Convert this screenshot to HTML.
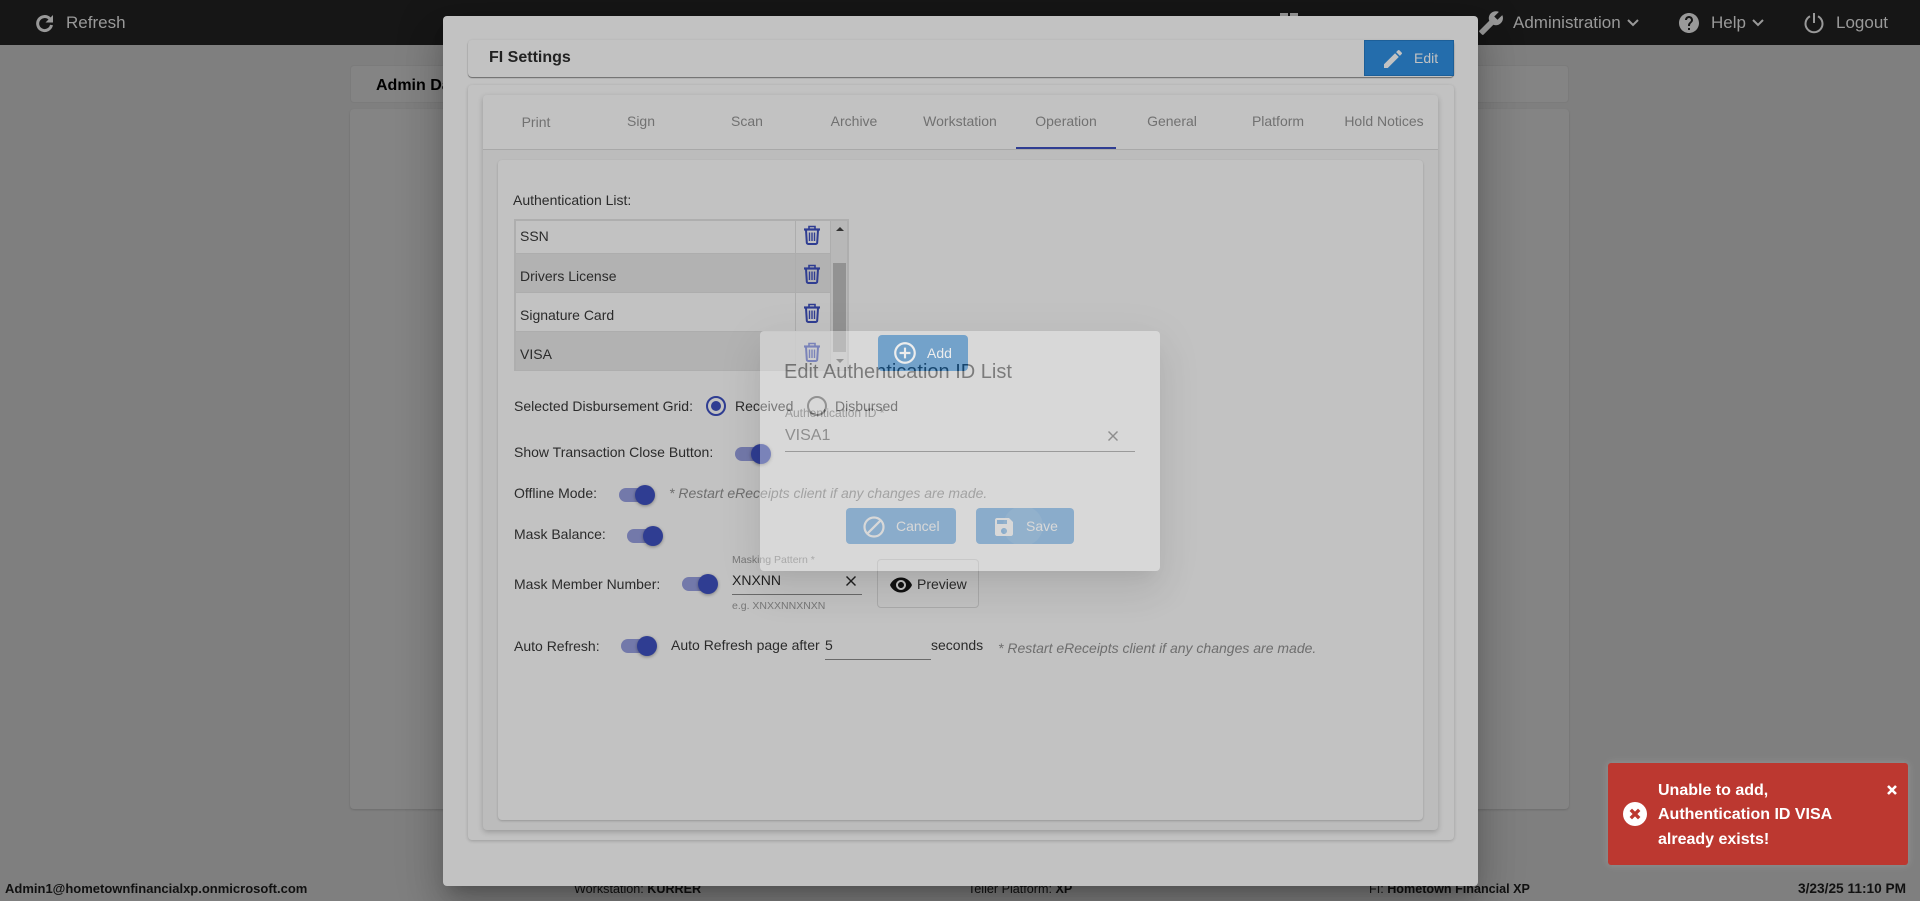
<!DOCTYPE html>
<html lang="en"><head><meta charset="utf-8"><title>FI Settings</title>
<style>
html,body{margin:0;padding:0;width:1920px;height:901px;overflow:hidden;background:#7f7f7f;font-family:"Liberation Sans",Arial,sans-serif}
div,span,svg{position:absolute;box-sizing:border-box}
.t{white-space:nowrap;line-height:20px;height:20px;font-size:14px;color:#2b2b2b}
.n{color:#999;font-size:17px}
.tab{color:#717171;font-size:14px;width:106px;text-align:center;top:111px}
.f{color:#111;font-size:12.6px;top:879px}
b{font-weight:700}
.it{font-style:italic;color:#6e6e6e;font-size:14px}
.trk{width:34px;height:14px;border-radius:7px;background:#7379aa}
.th{width:20px;height:20px;border-radius:50%;background:#2f3d92;box-shadow:0 1px 3px rgba(0,0,0,.35)}
.row{left:516px;width:314px;border-bottom:1px solid #adadad}
.btn{border-radius:4px;background:#2a88db}
.tr{left:803px;width:18px;height:20px;fill:none;stroke:#2f3d92}
</style></head><body>

<!-- header -->
<div style="left:0;top:0;width:1920px;height:45px;background:#161616"></div>
<svg style="left:34px;top:13px" width="22" height="22" viewBox="0 0 22 22" fill="none"><path d="M15.600 5.600A7 7 0 1 0 17.500 12" stroke="#999" stroke-width="3"/><path d="M19 2v7.500h-7.500z" fill="#999"/></svg>
<div class="t n" style="left:66px;top:13px">Refresh</div>
<div style="left:1280px;top:13px;width:8px;height:6px;background:#999"></div>
<div style="left:1290px;top:13px;width:8px;height:6px;background:#999"></div>
<svg style="left:1478px;top:10px;transform:scaleX(-1)" width="26" height="26" viewBox="0 0 24 24" fill="#999"><path d="M22.700 19l-9.100-9.100c.9-2.300.4-5-1.500-6.900-2-2-5-2.400-7.400-1.300L9 6 6 9 1.600 4.700C.4 7.100.9 10.100 2.900 12.100c1.900 1.900 4.600 2.400 6.900 1.500l9.100 9.100c.4.4 1 .4 1.400 0l2.300-2.300c.5-.4.5-1.100.1-1.400z"/></svg>
<div class="t n" style="left:1513px;top:13px">Administration</div>
<svg style="left:1627px;top:18px" width="12" height="10" viewBox="0 0 12 10" fill="none" stroke="#999" stroke-width="2"><path d="M1 2l5 5 5-5"/></svg>
<svg style="left:1677px;top:11px" width="24" height="24" viewBox="0 0 24 24" fill="#999"><path d="M12 2C6.480 2 2 6.480 2 12s4.480 10 10 10 10-4.480 10-10S17.520 2 12 2zm1 17h-2v-2h2v2zm2.070-7.750l-.9.920C13.450 12.900 13 13.500 13 15h-2v-.5c0-1.100.45-2.100 1.170-2.830l1.240-1.260c.37-.36.59-.86.59-1.410 0-1.100-.9-2-2-2s-2 .9-2 2H8c0-2.210 1.790-4 4-4s4 1.790 4 4c0 .88-.36 1.680-.93 2.250z"/></svg>
<div class="t n" style="left:1711px;top:13px">Help</div>
<svg style="left:1752px;top:18px" width="12" height="10" viewBox="0 0 12 10" fill="none" stroke="#999" stroke-width="2"><path d="M1 2l5 5 5-5"/></svg>
<svg style="left:1802px;top:11px" width="24" height="24" viewBox="0 0 24 24" fill="none" stroke="#999" stroke-width="2"><path d="M12 2v10M8 5.200a8.500 8.500 0 1 0 8 0"/></svg>
<div class="t n" style="left:1836px;top:13px">Logout</div>

<!-- page cards -->
<div style="left:350px;top:65px;width:1219px;height:38px;background:#848484;border:1px solid #7b7b7b;border-radius:4px"></div>
<div class="t" style="left:376px;top:76px;font-weight:700;font-size:16px;color:#000">Admin Dashboard</div>
<div style="left:350px;top:109px;width:1219px;height:700px;background:#848484;border-radius:4px;box-shadow:0 1px 2px rgba(0,0,0,.15)"></div>

<!-- footer -->
<div class="t f" style="left:5px;font-weight:700;font-size:13px">Admin1@hometownfinancialxp.onmicrosoft.com</div>
<div class="t f" style="left:574px">Workstation: <b>KURRER</b></div>
<div class="t f" style="left:968px">Teller Platform: <b>XP</b></div>
<div class="t f" style="left:1369px">FI: <b>Hometown Financial XP</b></div>
<div class="t f" style="left:1798px;font-weight:700;font-size:13.700px">3/23/25 11:10 PM</div>

<!-- modal -->
<div style="left:443px;top:16px;width:1035px;height:870px;background:#c2c2c2;border-radius:4px;box-shadow:0 11px 15px -7px rgba(0,0,0,.2),0 24px 38px 3px rgba(0,0,0,.14),0 9px 46px 8px rgba(0,0,0,.12)"></div>
<div style="left:468px;top:40px;width:986px;height:37px;background:#c2c2c2;border-radius:4px;box-shadow:0 1px 1px rgba(0,0,0,.45),0 0 2px rgba(0,0,0,.08)"></div>
<div class="t" style="left:489px;top:48px;font-weight:700;font-size:16px;color:#222">FI Settings</div>
<div style="left:1364px;top:40px;width:90px;height:36px;background:#246dac;border:1px solid #1d5f98"></div>
<svg style="left:1381px;top:47px" width="24" height="24" viewBox="0 0 24 24" fill="#c2c2c2"><path d="M3 17.250V21h3.750L17.810 9.940l-3.750-3.750L3 17.250zM20.710 7.040c.39-.39.39-1.020 0-1.410l-2.340-2.340c-.39-.39-1.020-.39-1.410 0l-1.830 1.830 3.750 3.750 1.830-1.830z"/></svg>
<div class="t" style="left:1414px;top:48px;color:#c2c2c2;font-size:14px">Edit</div>

<div style="left:468px;top:85px;width:986px;height:755px;background:#c2c2c2;border-radius:4px;box-shadow:0 1px 3px rgba(0,0,0,.2)"></div>
<div style="left:483px;top:95px;width:955px;height:735px;background:#bcbcbc;border-radius:4px;box-shadow:0 2px 6px rgba(0,0,0,.22)"></div>
<div style="left:483px;top:95px;width:955px;height:55px;background:#c2c2c2;border-bottom:1px solid #a8a8a8;border-radius:4px 4px 0 0"></div>
<div class="t tab" style="left:483px;top:112px">Print</div>
<div class="t tab" style="left:588px">Sign</div>
<div class="t tab" style="left:694px">Scan</div>
<div class="t tab" style="left:801px">Archive</div>
<div class="t tab" style="left:907px">Workstation</div>
<div class="t tab" style="left:1013px">Operation</div>
<div class="t tab" style="left:1119px">General</div>
<div class="t tab" style="left:1225px">Platform</div>
<div class="t tab" style="left:1331px">Hold Notices</div>
<div style="left:1016px;top:147px;width:100px;height:2px;background:#2f3d92"></div>
<div style="left:498px;top:160px;width:925px;height:660px;background:#c2c2c2;border-radius:4px;box-shadow:0 1px 2px rgba(0,0,0,.2)"></div>

<div class="t" style="left:513px;top:190px">Authentication List:</div>

<!-- list -->
<div style="left:514px;top:219px;width:335px;height:152px;border:2px solid #aeaeae;background:#c2c2c2"></div>
<div class="row" style="top:221px;height:33px"></div>
<div class="row" style="top:254px;height:39px;background:#b2b2b2"></div>
<div class="row" style="top:293px;height:39px"></div>
<div class="row" style="top:332px;height:38px;background:#b2b2b2;border-bottom:0"></div>
<div style="left:795px;top:221px;width:1px;height:149px;background:#adadad"></div>
<div style="left:830px;top:221px;width:1px;height:149px;background:#adadad"></div>
<div style="left:831px;top:221px;width:16px;height:149px;background:#b8b8b8"></div>
<div style="left:833px;top:263px;width:13px;height:89px;background:#929292"></div>
<div style="left:836px;top:227px;width:0;height:0;border:4px solid transparent;border-bottom:4px solid #333;border-top:0"></div>
<div style="left:836px;top:359px;width:0;height:0;border:4px solid transparent;border-top:4px solid #555;border-bottom:0"></div>
<div class="t" style="left:520px;top:226px">SSN</div>
<div class="t" style="left:520px;top:266px">Drivers License</div>
<div class="t" style="left:520px;top:305px">Signature Card</div>
<div class="t" style="left:520px;top:344px">VISA</div>
<svg class="tr" style="top:225px" viewBox="0 0 18 20"><path stroke-width="2.200" d="M1 4.500h16"/><path stroke-width="1.600" d="M6 4V1.500h6V4"/><path stroke-width="2" d="M3 5l.8 12.500a1.500 1.500 0 0 0 1.500 1.500h7.400a1.500 1.500 0 0 0 1.500-1.500L15 5"/><path stroke-width="1.400" d="M6.500 7.500v8.500M9 7.500v8.500M11.500 7.500v8.500"/></svg>
<svg class="tr" style="top:264px" viewBox="0 0 18 20"><path stroke-width="2.200" d="M1 4.500h16"/><path stroke-width="1.600" d="M6 4V1.500h6V4"/><path stroke-width="2" d="M3 5l.8 12.500a1.500 1.500 0 0 0 1.500 1.500h7.400a1.500 1.500 0 0 0 1.500-1.500L15 5"/><path stroke-width="1.400" d="M6.500 7.500v8.500M9 7.500v8.500M11.500 7.500v8.500"/></svg>
<svg class="tr" style="top:303px" viewBox="0 0 18 20"><path stroke-width="2.200" d="M1 4.500h16"/><path stroke-width="1.600" d="M6 4V1.500h6V4"/><path stroke-width="2" d="M3 5l.8 12.500a1.500 1.500 0 0 0 1.500 1.500h7.400a1.500 1.500 0 0 0 1.500-1.500L15 5"/><path stroke-width="1.400" d="M6.500 7.500v8.500M9 7.500v8.500M11.500 7.500v8.500"/></svg>
<svg class="tr" style="top:342px" viewBox="0 0 18 20"><path stroke-width="2.200" d="M1 4.500h16"/><path stroke-width="1.600" d="M6 4V1.500h6V4"/><path stroke-width="2" d="M3 5l.8 12.500a1.500 1.500 0 0 0 1.500 1.500h7.400a1.500 1.500 0 0 0 1.500-1.500L15 5"/><path stroke-width="1.400" d="M6.500 7.500v8.500M9 7.500v8.500M11.500 7.500v8.500"/></svg>

<!-- add btn -->
<div style="left:878px;top:335px;width:90px;height:36px;background:#246dac;border-radius:4px"></div>
<svg style="left:892px;top:340px" width="26" height="26" viewBox="0 0 24 24" fill="#e4e4e4"><path d="M13 7h-2v4H7v2h4v4h2v-4h4v-2h-4V7zm-1-5C6.480 2 2 6.480 2 12s4.480 10 10 10 10-4.480 10-10S17.520 2 12 2zm0 18c-4.410 0-8-3.590-8-8s3.590-8 8-8 8 3.590 8 8-3.590 8-8 8z"/></svg>
<div class="t" style="left:927px;top:343px;color:#e4e4e4">Add</div>

<!-- radios -->
<div class="t" style="left:514px;top:396px">Selected Disbursement Grid:</div>
<div style="left:706px;top:396px;width:20px;height:20px;border:2px solid #2f3d92;border-radius:50%"></div>
<div style="left:711px;top:401px;width:10px;height:10px;background:#2f3d92;border-radius:50%"></div>
<div class="t" style="left:735px;top:396px">Received</div>
<div style="left:807px;top:396px;width:20px;height:20px;border:2px solid #555;border-radius:50%"></div>
<div class="t" style="left:835px;top:396px">Disbursed</div>

<div class="t" style="left:514px;top:442px">Show Transaction Close Button:</div>
<div class="trk" style="left:735px;top:447px"></div><div class="th" style="left:751px;top:444px"></div>

<div class="t" style="left:514px;top:483px">Offline Mode:</div>
<div class="trk" style="left:619px;top:488px"></div><div class="th" style="left:635px;top:485px"></div>
<div class="t it" style="left:669px;top:483px">* Restart eReceipts client if any changes are made.</div>

<div class="t" style="left:514px;top:524px">Mask Balance:</div>
<div class="trk" style="left:627px;top:529px"></div><div class="th" style="left:643px;top:526px"></div>

<div class="t" style="left:514px;top:574px">Mask Member Number:</div>
<div class="trk" style="left:682px;top:577px"></div><div class="th" style="left:698px;top:574px"></div>
<div class="t" style="left:732px;top:550px;font-size:10.500px;color:#777">Masking Pattern *</div>
<div class="t" style="left:732px;top:570px;font-size:14px;color:#222">XNXNN</div>
<svg style="left:846px;top:576px" width="10" height="10" viewBox="5 5 14 14" fill="#222"><path d="M19 6.410L17.590 5 12 10.590 6.410 5 5 6.410 10.590 12 5 17.590 6.410 19 12 13.410 17.590 19 19 17.590 13.410 12z"/></svg>
<div style="left:732px;top:594px;width:130px;height:1px;background:#6a6a6a"></div>
<div class="t" style="left:732px;top:596px;font-size:10.500px;color:#777">e.g. XNXXNNXNXN</div>
<div style="left:877px;top:559px;width:102px;height:49px;border:1px solid #aaa;border-radius:4px"></div>
<svg style="left:889px;top:573px" width="24" height="24" viewBox="0 0 24 24" fill="#111"><path d="M12 4.500C7 4.500 2.730 7.610 1 12c1.730 4.390 6 7.500 11 7.500s9.270-3.110 11-7.500c-1.730-4.390-6-7.500-11-7.500zM12 17c-2.760 0-5-2.240-5-5s2.240-5 5-5 5 2.240 5 5-2.240 5-5 5zm0-8c-1.660 0-3 1.340-3 3s1.340 3 3 3 3-1.340 3-3-1.340-3-3-3z"/></svg>
<div class="t" style="left:917px;top:574px">Preview</div>

<div class="t" style="left:514px;top:636px">Auto Refresh:</div>
<div class="trk" style="left:621px;top:639px"></div><div class="th" style="left:637px;top:636px"></div>
<div class="t" style="left:671px;top:635px">Auto Refresh page after</div>
<div class="t" style="left:825px;top:635px">5</div>
<div style="left:825px;top:659px;width:106px;height:1px;background:#6a6a6a"></div>
<div class="t" style="left:931px;top:635px">seconds</div>
<div class="t it" style="left:998px;top:638px">* Restart eReceipts client if any changes are made.</div>

<!-- dialog, mid fade-in -->
<div style="left:0;top:0;width:1920px;height:901px;opacity:.36">
  <div style="left:760px;top:331px;width:400px;height:240px;background:#fff;border-radius:4px;box-shadow:0 11px 15px -7px rgba(0,0,0,.2),0 24px 38px 3px rgba(0,0,0,.14),0 9px 46px 8px rgba(0,0,0,.12)"></div>
  <div class="t" style="left:784px;top:362px;font-size:20px;color:#000">Edit Authentication ID List</div>
  <div class="t" style="left:785px;top:403px;font-size:12px;color:#555">Authentication ID *</div>
  <div class="t" style="left:785px;top:426px;font-size:16px;color:#333">VISA1</div>
  <svg style="left:1108px;top:431px" width="10" height="10" viewBox="5 5 14 14" fill="#333"><path d="M19 6.410L17.590 5 12 10.590 6.410 5 5 6.410 10.590 12 5 17.590 6.410 19 12 13.410 17.590 19 19 17.590 13.410 12z"/></svg>
  <div style="left:785px;top:451px;width:350px;height:1px;background:#555"></div>
  <div class="btn" style="left:846px;top:508px;width:110px;height:36px"></div>
  <svg style="left:862px;top:515px" width="24" height="24" viewBox="0 0 24 24" fill="none" stroke="#fff" stroke-width="2.200"><circle cx="12" cy="12" r="9.500"/><path d="M5.300 18.700L18.700 5.300"/></svg>
  <div class="t" style="left:896px;top:516px;color:#fff">Cancel</div>
  <div class="btn" style="left:976px;top:508px;width:98px;height:36px"></div>
  <div style="left:1003px;top:506px;width:40px;height:40px;border-radius:50%;background:rgba(255,255,255,.1)"></div>
  <svg style="left:992px;top:515px" width="24" height="24" viewBox="0 0 24 24" fill="#fff"><path d="M17 3H5c-1.110 0-2 .9-2 2v14c0 1.100.89 2 2 2h14c1.100 0 2-.9 2-2V7l-4-4zm-5 16c-1.660 0-3-1.340-3-3s1.340-3 3-3 3 1.340 3 3-1.340 3-3 3zm3-10H5V5h10v4z"/></svg>
  <div class="t" style="left:1026px;top:516px;color:#fff">Save</div>
</div>

<!-- toast -->
<div style="left:1608px;top:763px;width:300px;height:102px;background:#bc3830;border-radius:3px;box-shadow:0 0 8px rgba(255,255,255,.18)"></div>
<svg style="left:1623px;top:802px" width="24" height="24" viewBox="0 0 24 24"><circle cx="12" cy="12" r="12" fill="#fff"/><path d="M7.800 7.800l8.400 8.400M16.200 7.800l-8.400 8.400" stroke="#bc3830" stroke-width="3.400"/></svg>
<div class="t" style="left:1658px;top:781px;color:#fff;font-weight:700;font-size:16px">Unable to add,</div>
<div class="t" style="left:1658px;top:805px;color:#fff;font-weight:700;font-size:16px">Authentication ID VISA</div>
<div class="t" style="left:1658px;top:830px;color:#fff;font-weight:700;font-size:16px">already exists!</div>
<svg style="left:1887px;top:785px" width="10" height="10" viewBox="0 0 10 10"><path d="M1 1l8 8M9 1L1 9" stroke="#fff" stroke-width="2.600"/></svg>

</body></html>
